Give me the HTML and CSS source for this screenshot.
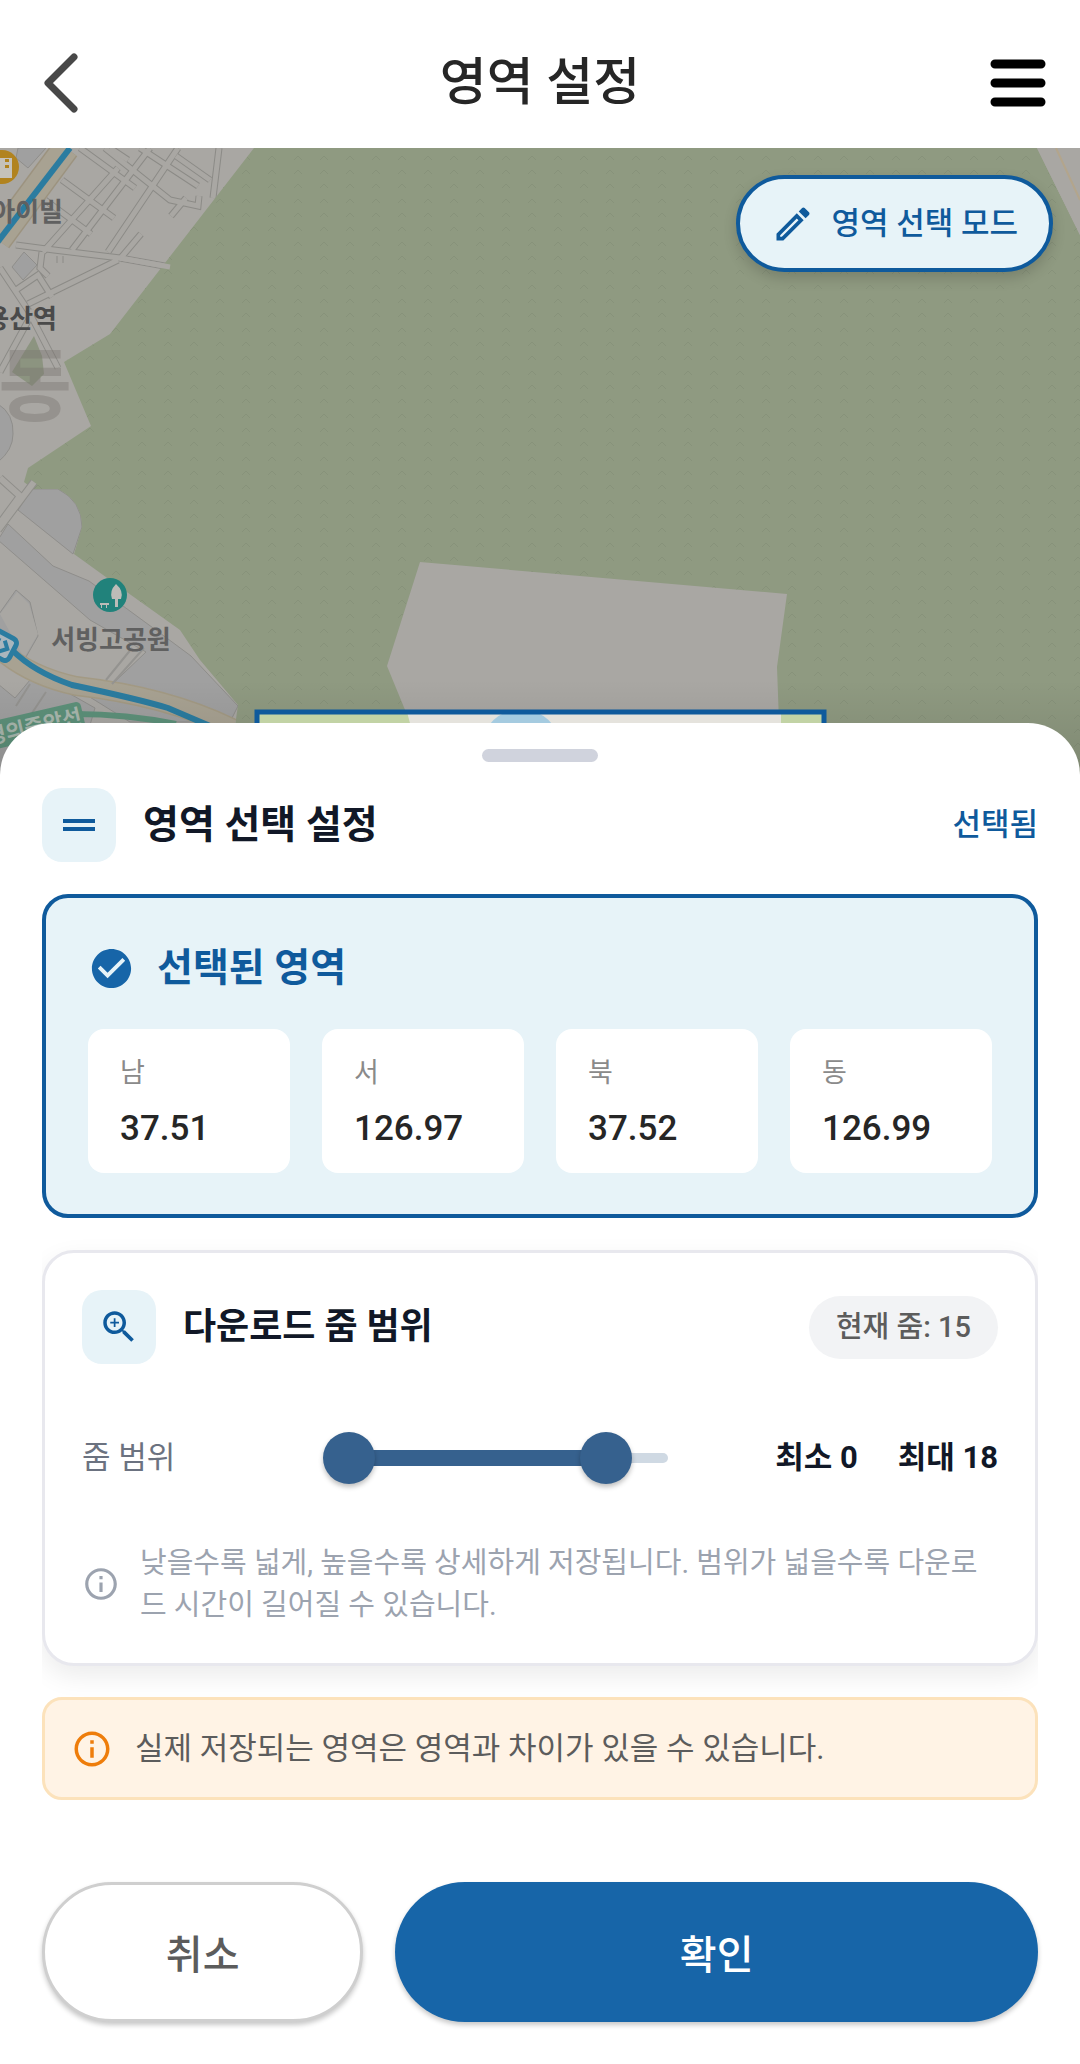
FILE: index.html
```
<!DOCTYPE html>
<html lang="ko">
<head>
    <meta charset="UTF-8">
    <meta name="viewport" content="width=device-width, initial-scale=1.0">
    <title>영역 설정</title>
    <link rel="stylesheet" href="styles.css">
</head>
<body>
    <header class="app-bar">
        <button class="icon-btn icon-back" type="button" aria-label="뒤로">
            <svg width="36" height="60" viewBox="0 0 36 60" fill="none" stroke="#484848" stroke-width="7" stroke-linecap="round" stroke-linejoin="round">
                <path d="M32 4 6 30l26 26"/>
            </svg>
        </button>
        <h1>영역 설정</h1>
        <button class="icon-btn" type="button" aria-label="메뉴">
            <svg width="56" height="50" viewBox="0 0 56 50" stroke="#000" stroke-width="9" stroke-linecap="round">
                <path d="M5 6h46M5 25h46M5 44h46"/>
            </svg>
        </button>
    </header>

    <main class="map">
        <svg class="map-canvas" viewBox="0 148 1080 628" preserveAspectRatio="xMidYMin slice" aria-hidden="true">
            <defs>
                <pattern id="grass" x="311" y="152" width="26" height="43" patternUnits="userSpaceOnUse">
                    <path d="M9 8l4-4 4 4M9 22l4-4 4 4M9 36l4-4 4 4" fill="none" stroke="#87927a" stroke-width="1"/>
                </pattern>
                <linearGradient id="sheetShade" x1="0" y1="0" x2="0" y2="1">
                    <stop offset="0" stop-color="#000" stop-opacity="0"/>
                    <stop offset="1" stop-color="#000" stop-opacity=".12"/>
                </linearGradient>
                <path id="forest" d="M254 148 110 334 64 362l27 64-51 34-12 8-4 14 9 7h25q24 12 24 38l-8 27 36 26 70 50 20 30 38 45-10 71h852V235l-43-87z"/>
            </defs>

            <rect y="148" width="1080" height="628" fill="#a9a7a3"/>

            <!-- blocks -->
            <g fill="#a0a0a0" stroke="#8f8e8b" stroke-width="1">
                <path d="M18 148h28L28 168 16 158z"/>
                <path d="M12 267l12-15 13 13-14 15z"/>
                <path d="M-2 404q16 10 15 30 0 16-15 28z"/>
                <path d="M18 510l14-21h26q24 12 24 38l-9 27z"/>
                <path d="M-2 540l10-16 45 42 36 15 75 55 27 20 47 50-8 16H130L-2 640l1-26 17-24 14 12 8 34-16 28 80 30 44-42-56-32z"/>
                <path d="M-2 684l17 14 20-24 60 34-20 68H-2z"/>
            </g>
            <path d="M0 614l17-22 12 12 9 30-14 24z" fill="#a9a7a3"/>

            <!-- street grid -->
            <g fill="none" stroke="#8c8b87" stroke-width="7">
                <path d="M80 148l55 40M62 180l52 38M45 200l46 34M105 148l65 52 28 6 1-10M140 148l58 38M176 156l34 24"/>
                <path d="M178 148l-70 104M150 148l-78 102M128 160l-18-12M118 168l-75 84M219 148l-6 50M186 198l-15 18M141 234l-22 26"/>
                <path d="M16 245l38 5 66 8 50 9M118 260l-90 44M0 268l28 42 30 58M34 310 0 372M42 252l-2 16 8 8M16 290l22-15 14 22M60 256v7"/>
            </g>
            <g fill="none" stroke="#a9a7a3" stroke-width="5">
                <path d="M80 148l55 40M62 180l52 38M45 200l46 34M105 148l65 52 28 6 1-10M140 148l58 38M176 156l34 24"/>
                <path d="M178 148l-70 104M150 148l-78 102M128 160l-18-12M118 168l-75 84M219 148l-6 50M186 198l-15 18M141 234l-22 26"/>
                <path d="M16 245l38 5 66 8 50 9M118 260l-90 44M0 268l28 42 30 58M34 310 0 372M42 252l-2 16 8 8M16 290l22-15 14 22M60 256v7"/>
            </g>

            <use href="#forest" fill="#8f9a81"/>
            <use href="#forest" fill="url(#grass)"/>
            <path d="M120 258l50 9" stroke="#a9a7a3" stroke-width="5"/>
            <path d="M34 336l8 20 2 18-12 12-20-14z" fill="#8c9480"/>
            <path d="M1037 148l43 87v-87z" fill="#a9a7a3"/>
            <path d="M1056 148l24 52" stroke="#b3a58c" stroke-width="2"/>
            <path d="M0 478l20 18-22 30M-2 530l36-48" fill="none" stroke="#8f8e8a" stroke-width="8"/>
            <path d="M0 478l20 18-22 30M-2 530l36-48" fill="none" stroke="#a9a7a3" stroke-width="6"/>
            <path d="M420 562l367 32-10 73 4 109H410V722l-23-56z" fill="#a9a7a3"/>

            <!-- roads and rail -->
            <path d="M66 148-2 240" stroke="#9c937f" stroke-width="28"/>
            <path d="M66 148-2 240" stroke="#a8a292" stroke-width="25"/>
            <path d="M0 650q30 26 76 36 90 10 156 42" fill="none" stroke="#a39a84" stroke-width="20"/>
            <path d="M0 650q30 26 76 36 90 10 156 42" fill="none" stroke="#a8a292" stroke-width="17"/>
            <path d="M144 648l-32 36M132 648l-26 32M30 684l-14 22M46 692l-16 24" stroke="#949390" stroke-width="2"/>
            <path d="M70 148-4 244" stroke="#2b7ca0" stroke-width="6"/>
            <path d="M12 650q22 22 60 35 66 14 96 23l42 18" fill="none" stroke="#2b7ca0" stroke-width="6"/>
            <path d="M76 714q50 0 100 10" fill="none" stroke="#5d917a" stroke-width="6"/>

            <g transform="rotate(-13 73 716)">
                <rect x="-40" y="703" width="123" height="28" rx="5" fill="#5d917a"/>
                <text class="map-line-label" x="81" y="725" text-anchor="end">경의중앙선</text>
            </g>
            <g transform="rotate(28 2 646)">
                <rect x="-16" y="634" width="30" height="24" rx="5" fill="#a9b6bd" stroke="#2b7ca0" stroke-width="5"/>
                <path d="M-4 640v12M2 640l6 6-6 6" fill="none" stroke="#2b7ca0" stroke-width="4"/>
            </g>

            <!-- places -->
            <circle cx="2" cy="167" r="17" fill="#b1831f"/>
            <path d="M-4 158h16v20H-4z" fill="#c5c2bb"/>
            <path d="M7 159v3M7 165v3" stroke="#b1831f" stroke-width="4"/>
            <circle cx="110" cy="595" r="17" fill="#21827b"/>
            <path d="M116 584q-7 7-4 15h3v8h3v-8h3q3-8-5-15zM100 603h9v2h-2v3h-1v-3h-4v3h-1v-3h-1z" fill="#bcbcb8"/>
            <text class="map-ward" x="35" y="414" text-anchor="middle">동</text>
            <text class="map-place" x="63" y="221" text-anchor="end">아이빌</text>
            <text class="map-station" x="57" y="328" text-anchor="end">용산역</text>
            <text class="map-place" x="111" y="649" text-anchor="middle">서빙고공원</text>

            <rect y="680" width="1080" height="96" fill="url(#sheetShade)"/>

            <!-- selected bounds -->
            <path d="M257 712h567v64H257z" fill="#c2d3a5"/>
            <path d="M407 712h374v64H424z" fill="#e5e3dd"/>
            <path d="M490 724q8-10 18-12h26q10 2 18 12z" fill="#a5cbe0"/>
            <path d="M257 780v-68h567v68" fill="none" stroke="#0f5a9c" stroke-width="5"/>
        </svg>

        <button class="mode-btn" type="button">
            <svg width="44" height="44" viewBox="0 0 24 24" fill="currentColor">
                <path d="M14.06 9.02l.92.92L5.92 19H5v-.92l9.06-9.06M17.66 3c-.25 0-.51.1-.7.29l-1.83 1.83 3.75 3.75 1.83-1.83c.39-.39.39-1.02 0-1.41l-2.34-2.34c-.2-.2-.45-.29-.71-.29zm-3.6 3.19L3 17.25V21h3.75L17.81 9.94l-3.75-3.75z"/>
            </svg>
            영역 선택 모드
        </button>
    </main>

    <section class="sheet">
        <div class="handle"></div>

        <div class="section-head">
            <span class="icon-box">
                <svg width="48" height="48" viewBox="0 0 24 24" fill="currentColor"><path d="M20 9H4v2h16V9zM4 15h16v-2H4v2z"/></svg>
            </span>
            <h2>영역 선택 설정</h2>
            <span class="state">선택됨</span>
        </div>

        <div class="area-card">
            <div class="area-title">
                <svg width="47" height="47" viewBox="0 0 24 24" fill="currentColor">
                    <path d="M12 2C6.48 2 2 6.48 2 12s4.48 10 10 10 10-4.48 10-10S17.52 2 12 2zm-2 15l-5-5 1.41-1.41L10 14.17l7.59-7.59L19 8l-9 9z"/>
                </svg>
                <h2>선택된 영역</h2>
            </div>
            <dl class="bounds">
                <div class="bound"><dt>남</dt><dd>37.51</dd></div>
                <div class="bound"><dt>서</dt><dd>126.97</dd></div>
                <div class="bound"><dt>북</dt><dd>37.52</dd></div>
                <div class="bound"><dt>동</dt><dd>126.99</dd></div>
            </dl>
        </div>

        <div class="zoom-card">
            <div class="section-head">
                <span class="icon-box">
                    <svg width="42" height="42" viewBox="0 0 24 24" fill="currentColor">
                        <path d="M15.5 14h-.79l-.28-.27C15.41 12.59 16 11.11 16 9.5 16 5.91 13.09 3 9.5 3S3 5.91 3 9.5 5.91 16 9.5 16c1.61 0 3.09-.59 4.23-1.57l.27.28v.79l5 4.99L20.49 19l-4.99-5zm-6 0C7.01 14 5 11.99 5 9.5S7.01 5 9.5 5 14 7.01 14 9.5 11.99 14 9.5 14zm.5-7H9v2H7v1h2v2h1v-2h2V9h-2z"/>
                    </svg>
                </span>
                <h3>다운로드 줌 범위</h3>
                <span class="chip">현재 줌: 15</span>
            </div>

            <div class="zoom-row">
                <span class="zoom-label" id="zoomLabel">줌 범위</span>
                <div class="range" role="group" aria-labelledby="zoomLabel">
                    <div class="rail"></div>
                    <div class="fill-area"><div class="fill" id="fill" style="left: 0%; width: 82%"></div></div>
                    <input type="range" id="minZoom" min="0" max="22" value="0" aria-label="최소 줌">
                    <input type="range" id="maxZoom" min="0" max="22" value="18" aria-label="최대 줌">
                </div>
                <output class="zoom-value" id="minText" for="minZoom">최소 0</output>
                <output class="zoom-value" id="maxText" for="maxZoom">최대 18</output>
            </div>

            <div class="hint">
                <svg width="38" height="38" viewBox="0 0 24 24" fill="currentColor">
                    <path d="M11 7h2v2h-2zm0 4h2v6h-2zm1-9C6.48 2 2 6.48 2 12s4.48 10 10 10 10-4.48 10-10S17.52 2 12 2zm0 18c-4.41 0-8-3.59-8-8s3.59-8 8-8 8 3.59 8 8-3.59 8-8 8z"/>
                </svg>
                <p>낮을수록 넓게, 높을수록 상세하게 저장됩니다. 범위가 넓을수록 다운로드 시간이 길어질 수 있습니다.</p>
            </div>
        </div>

        <div class="notice">
            <svg width="42" height="42" viewBox="0 0 24 24" fill="currentColor">
                <path d="M11 7h2v2h-2zm0 4h2v6h-2zm1-9C6.48 2 2 6.48 2 12s4.48 10 10 10 10-4.48 10-10S17.52 2 12 2zm0 18c-4.41 0-8-3.59-8-8s3.59-8 8-8 8 3.59 8 8-3.59 8-8 8z"/>
            </svg>
            <p>실제 저장되는 영역은 영역과 차이가 있을 수 있습니다.</p>
        </div>

        <div class="actions">
            <button class="btn btn-cancel" type="button">취소</button>
            <button class="btn btn-confirm" type="button">확인</button>
        </div>
    </section>

    <script>
        const minZoom = document.getElementById('minZoom');
        const maxZoom = document.getElementById('maxZoom');

        // Keep the fill and the two values in step with the thumbs
        function updateRange() {
            const min = Math.min(+minZoom.value, +maxZoom.value);
            const max = Math.max(+minZoom.value, +maxZoom.value);
            const fill = document.getElementById('fill');

            fill.style.left = (min / 22 * 100) + '%';
            fill.style.width = ((max - min) / 22 * 100) + '%';
            document.getElementById('minText').textContent = '최소 ' + min;
            document.getElementById('maxText').textContent = '최대 ' + max;
        }

        minZoom.addEventListener('input', updateRange);
        maxZoom.addEventListener('input', updateRange);
    </script>
</body>
</html>
```
FILE: styles.css
```
:root {
    --primary: #1765a8;
    --primary-dark: #0f5a9c;
    --primary-light: #e7f3f8;
    --slider: #36618e;
    --text-dark: #111827;
    --text-gray: #5c5c5c;
}

* {
    margin: 0;
    padding: 0;
    box-sizing: border-box;
}

body {
    font-family: Roboto, "Noto Sans CJK KR", sans-serif;
    background: #ffffff;
    color: #262626;
    min-height: 100vh;
    display: flex;
    flex-direction: column;
}

button {
    font-family: inherit;
    cursor: pointer;
}

svg {
    display: block;
    flex-shrink: 0;
}

/* Header */
.app-bar {
    display: flex;
    align-items: center;
    height: 148px;
    padding: 18px 34px 0;
    background: #ffffff;
}

.app-bar h1 {
    flex: 1;
    font-size: 51px;
    line-height: 72px;
    font-weight: 500;
    text-align: center;
}

.icon-btn {
    display: flex;
    width: 56px;
    border: none;
    background: none;
}

.icon-back {
    padding-left: 8px;
}

/* Map */
.map {
    position: relative;
    flex: 1;
    min-height: 400px;
    background: #8f9a81;
}

.map-canvas {
    position: absolute;
    width: 100%;
    height: 100%;
}

.map-place,
.map-station {
    font-size: 26px;
    font-weight: 700;
    fill: #606060;
}

.map-station {
    fill: #4a4a4a;
}

.map-ward {
    font-size: 80px;
    font-weight: 700;
    fill: #77746e;
    fill-opacity: 0.4;
}

.map-line-label {
    font-size: 21px;
    font-weight: 700;
    fill: #a9b8ae;
}

.mode-btn {
    position: absolute;
    top: 27px;
    right: 27px;
    display: flex;
    align-items: center;
    gap: 16px;
    height: 97px;
    padding: 0 31px;
    border: 4px solid var(--primary-dark);
    border-radius: 49px;
    background: var(--primary-light);
    color: var(--primary-dark);
    font-size: 31px;
    line-height: 44px;
    font-weight: 500;
    box-shadow: 0 6px 14px rgba(0, 0, 0, 0.16);
}

/* Bottom sheet */
.sheet {
    position: relative;
    margin-top: -52px;
    padding: 26px 42px 42px;
    border-radius: 52px 52px 0 0;
    background: #ffffff;
}

.handle {
    width: 116px;
    height: 13px;
    margin: 0 auto 26px;
    border-radius: 7px;
    background: #d0d3dd;
}

.section-head {
    display: flex;
    align-items: center;
    gap: 27px;
}

.icon-box {
    display: flex;
    align-items: center;
    justify-content: center;
    width: 74px;
    height: 74px;
    border-radius: 20px;
    background: var(--primary-light);
    color: var(--primary-dark);
}

h2,
h3 {
    font-size: 39px;
    line-height: 58px;
    font-weight: 700;
    color: var(--text-dark);
}

h3 {
    font-size: 36px;
}

.state {
    margin-left: auto;
    font-size: 31px;
    line-height: 44px;
    font-weight: 500;
    color: var(--primary-dark);
}

.area-card {
    margin-top: 32px;
    padding: 41px 42px;
    border: 4px solid var(--primary-dark);
    border-radius: 26px;
    background: var(--primary-light);
}

.area-title {
    display: flex;
    align-items: center;
    gap: 22px;
    color: var(--primary);
}

.area-title h2 {
    color: var(--primary-dark);
}

.bounds {
    display: grid;
    grid-template-columns: repeat(4, 1fr);
    gap: 32px;
    margin-top: 32px;
}

.bound {
    padding: 26px 32px 20px;
    border-radius: 16px;
    background: #ffffff;
}

.bound dt {
    font-size: 27px;
    line-height: 36px;
    margin-bottom: 14px;
    color: #8a8a8a;
}

.bound dd {
    font-size: 35px;
    line-height: 48px;
    font-weight: 500;
}

.zoom-card {
    margin-top: 32px;
    padding: 37px;
    border: 3px solid #e8e8ee;
    border-radius: 32px;
    background: #ffffff;
    box-shadow: 0 10px 26px rgba(0, 0, 0, 0.08);
    clip-path: inset(-24px 0 -31px);
}

.chip {
    margin-left: auto;
    padding: 0 27px;
    border-radius: 32px;
    background: #f2f3f5;
    color: var(--text-gray);
    font-size: 29px;
    line-height: 63px;
    font-weight: 500;
}

.zoom-row {
    display: flex;
    align-items: center;
    margin-top: 68px;
}

.zoom-label {
    font-size: 31px;
    line-height: 44px;
    color: #6b7280;
}

.range {
    position: relative;
    flex: 1;
    height: 52px;
    margin: 0 86px 0 148px;
}

.rail,
.fill-area {
    position: absolute;
    top: 21px;
    left: 21px;
    right: 21px;
    height: 10px;
    border-radius: 5px;
    background: #cfd9e3;
}

.fill-area {
    top: 18px;
    left: 26px;
    right: 26px;
    height: 16px;
    background: none;
}

.fill {
    position: absolute;
    height: 100%;
    background: var(--slider);
}

.range input {
    position: absolute;
    width: 100%;
    height: 52px;
    appearance: none;
    background: none;
    pointer-events: none;
}

.range input::-webkit-slider-thumb {
    appearance: none;
    width: 52px;
    height: 52px;
    border-radius: 50%;
    background: var(--slider);
    box-shadow: 0 3px 5px rgba(0, 0, 0, 0.25);
    pointer-events: auto;
}

.zoom-value {
    font-size: 31px;
    line-height: 44px;
    font-weight: 700;
    color: var(--text-dark);
}

.zoom-value + .zoom-value {
    margin-left: 40px;
}

.hint {
    display: flex;
    align-items: center;
    gap: 20px;
    margin-top: 58px;
    color: #9ca3af;
}

.hint p {
    font-size: 29px;
    line-height: 42px;
}

.notice {
    display: flex;
    align-items: center;
    gap: 22px;
    min-height: 103px;
    margin-top: 31px;
    padding: 0 26px;
    border: 3px solid #fce2bb;
    border-radius: 20px;
    background: #fff3e5;
    color: #ee7d0b;
}

.notice p {
    font-size: 31px;
    line-height: 44px;
    color: var(--text-gray);
}

.actions {
    display: grid;
    grid-template-columns: 1fr 2fr;
    gap: 32px;
    margin-top: 82px;
}

.btn {
    height: 140px;
    border: none;
    border-radius: 70px;
    font-size: 40px;
    font-weight: 500;
    box-shadow: 0 3px 5px rgba(0, 0, 0, 0.22);
}

.btn-cancel {
    border: 3px solid #cfcfcf;
    background: #ffffff;
    color: var(--text-gray);
}

.btn-confirm {
    background: var(--primary);
    color: #ffffff;
}
```
